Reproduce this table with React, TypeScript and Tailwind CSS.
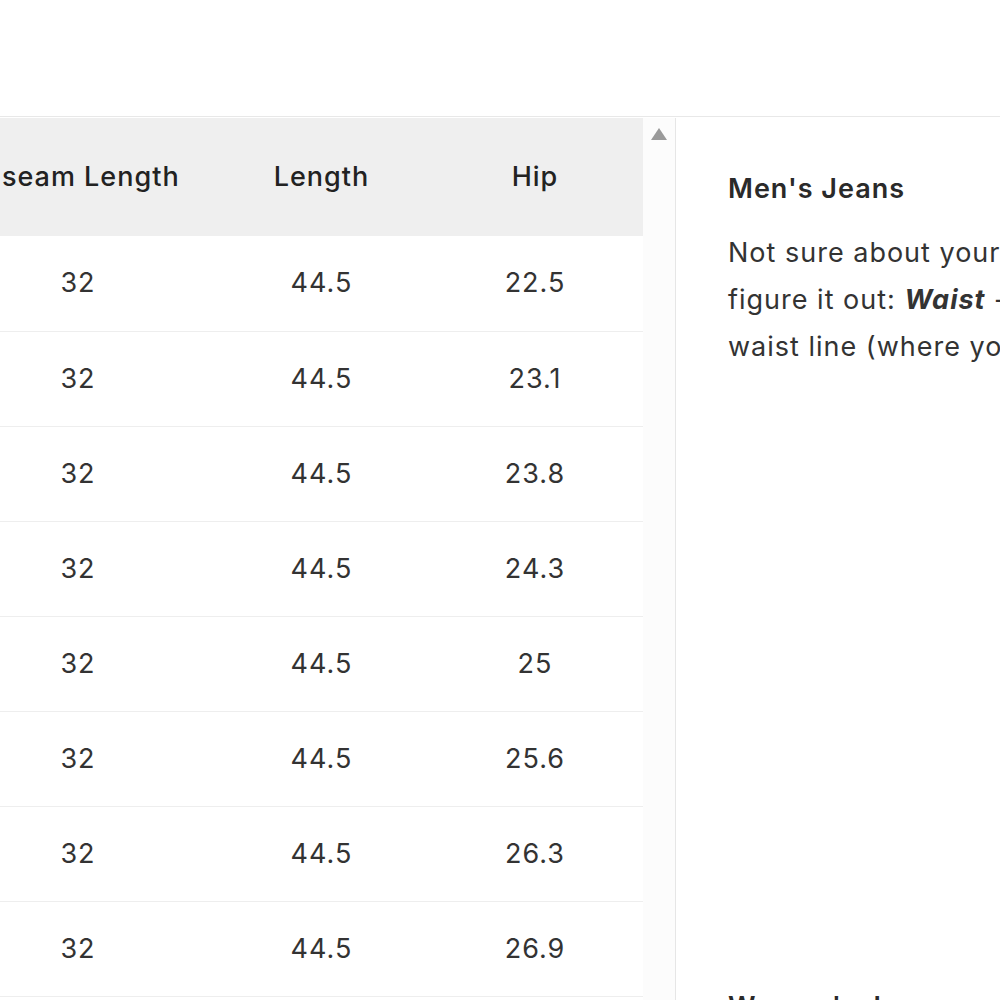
const HIPS = ["22.5", "23.1", "23.8", "24.3", "25", "25.6", "26.3", "26.9", "27.5"]

const COLS = "grid grid-cols-[244px_243px_200px]"

function SizeTable() {
  return (
    <div className="w-[643px] overflow-hidden font-['Inter',sans-serif] tracking-[1px]">
      <div className="ml-[-44px] w-[687px]">
        <div className={`${COLS} h-[118px] items-center bg-[#efefef] text-[27px] font-medium text-[#222]`}>
          <div className="text-center whitespace-nowrap">Inseam Length</div>
          <div className="text-center">Length</div>
          <div className="pr-4 text-center">Hip</div>
        </div>
        {HIPS.map((hip, i) => (
          <div
            key={hip}
            className={`${COLS} h-[95px] items-center text-[27px] text-[#333] ${i > 0 ? "border-t border-[#eeeeee]" : ""}`}
          >
            <div className="text-center">32</div>
            <div className="text-center">44.5</div>
            <div className="pr-4 text-center">{hip}</div>
          </div>
        ))}
      </div>
    </div>
  )
}

function Scrollbar() {
  return (
    <div className="flex w-[33px] justify-center border-r border-[#e6e6e6] bg-[#fcfcfc] pt-[9px]">
      <svg width="18" height="14" viewBox="0 0 18 14">
        <path d="M9 1 L17 13 L1 13 Z" fill="#9a9a9a" />
      </svg>
    </div>
  )
}

function Guide() {
  return (
    <div className="flex-1 overflow-hidden pl-[52px] pt-[51px] font-['Inter',sans-serif] tracking-[1px] text-[#333]">
      <h3 className="text-[27px] font-semibold text-[#2a2a2a]">Men's Jeans</h3>
      <div className="mt-[19px] text-[27px] leading-[47px]">
        <p className="whitespace-nowrap">Not sure about your size? Here's how to</p>
        <p className="whitespace-nowrap">
          figure it out: <b className="italic">Waist</b> - Measure around your natural
        </p>
        <p className="whitespace-nowrap">waist line (where you normally wear your jeans).</p>
      </div>
      <h3 className="mt-[617px] text-[27px] font-semibold text-[#2a2a2a]">Women's Jeans</h3>
    </div>
  )
}

export default function App() {
  return (
    <div className="h-[1000px] w-[1000px] overflow-hidden bg-white">
      <div className="h-[116px]" />
      <div className="flex h-[884px] border-t border-[#e8e8e8] pt-[1px]">
        <SizeTable />
        <Scrollbar />
        <Guide />
      </div>
    </div>
  )
}
